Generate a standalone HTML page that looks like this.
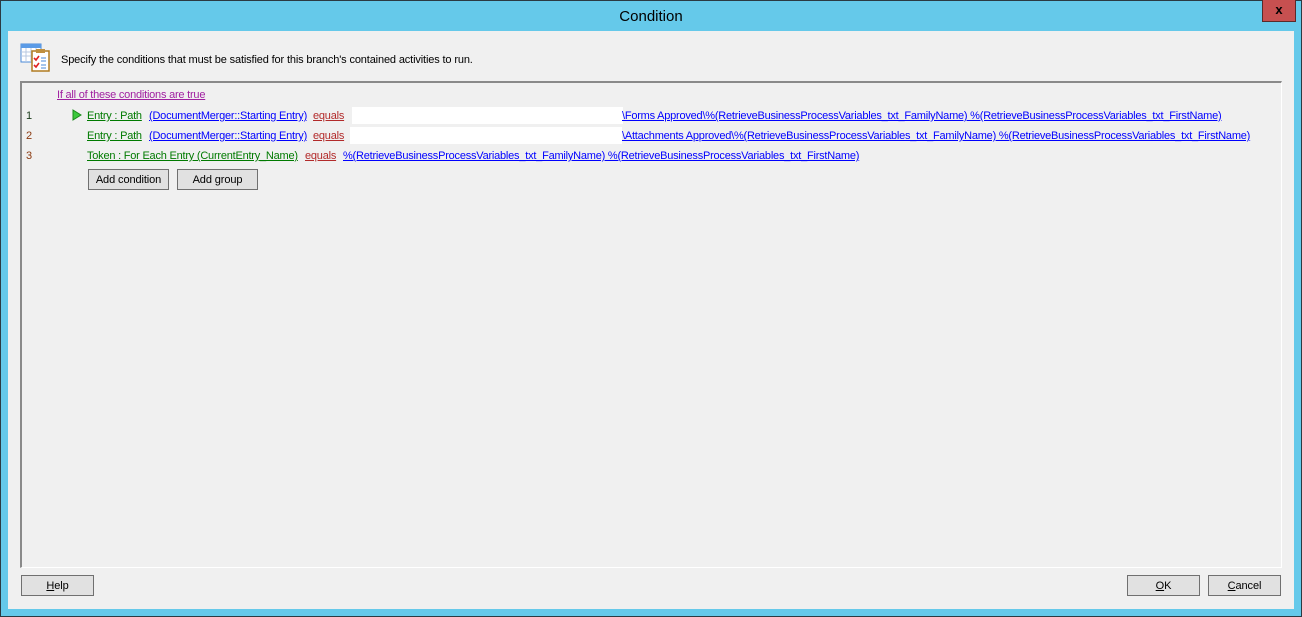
<!DOCTYPE html>
<html><head><style>
*{margin:0;padding:0;box-sizing:border-box}
body{width:1302px;height:617px;background:#65c9ea;position:relative;overflow:hidden;font-family:"Liberation Sans",sans-serif;font-size:11px;letter-spacing:-0.22px}
.outer{position:absolute;left:0;top:0;width:1302px;height:617px;border:1px solid #2b3a42}
.title{position:absolute;left:0;width:1302px;top:8px;text-align:center;font-size:15px;letter-spacing:0;color:#000}
.close{position:absolute;left:1262px;top:0;width:34px;height:22px;background:#c75050;border:1px solid #5a2a2a;border-top:none;color:#000;font-weight:bold;font-size:13px;text-align:center;line-height:20px;letter-spacing:0}
.content{position:absolute;left:8px;top:31px;width:1286px;height:578px;background:#f0f0f0}
.t{position:absolute;white-space:nowrap;line-height:13px}
.u{text-decoration:underline}
.panel{position:absolute;left:20px;top:81px;width:1262px;height:487px;border-top:2px solid #8a8a8a;border-left:2px solid #8a8a8a;border-right:1px solid #fff;border-bottom:1px solid #fff;background:#f0f0f0}
.btn{position:absolute;height:21px;background:#e1e1e1;border:1px solid #707070;text-align:center;line-height:20px;color:#000;letter-spacing:-0.1px}
.g{color:#007a00}.b{color:#0000ff}.r{color:#b22a2a}
.wb{position:absolute;background:#fff;height:17px}
</style></head><body>
<div class="outer"></div>
<div class="title">Condition</div>
<div class="close">x</div>
<div class="content"></div>
<svg style="position:absolute;left:20px;top:43px" width="32" height="30" viewBox="0 0 32 30">
<rect x="1" y="1" width="20" height="18" fill="#fff" stroke="#4a8ad8"/>
<rect x="1" y="1" width="20" height="4" fill="#5b9be6"/>
<path d="M1 9h20M1 13h20M6 5v14M11 5v14M16 5v14" stroke="#b8c8e0"/>
<rect x="12" y="8" width="17" height="20" fill="#fff" stroke="#b07a20" stroke-width="1.5"/>
<rect x="16" y="6" width="9" height="4" fill="#c09040"/>
<path d="M14 15l2 2 3-4M14 22l2 2 3-4" stroke="#e02020" stroke-width="1.6" fill="none"/>
<path d="M21 15h5M21 18h5M21 22h5M21 25h5" stroke="#4a8ad8"/>
</svg>
<div class="t" style="left:61px;top:54px;color:#000;letter-spacing:-0.14px">Specify the conditions that must be satisfied for this branch's contained activities to run.</div>
<div class="panel"></div>
<div class="t u" style="left:57px;top:89px;color:#a020a0">If all of these conditions are true</div>
<div class="t" style="left:26px;top:110px;color:#1a3a1a">1</div>
<div class="t" style="left:26px;top:130px;color:#8b3a10">2</div>
<div class="t" style="left:26px;top:150px;color:#8b3a10">3</div>
<svg style="position:absolute;left:72px;top:109px" width="10" height="12"><path d="M1 1L9 6L1 11Z" fill="#3cc83c" stroke="#1a8a1a"/></svg>
<div class="t u g" style="left:87px;top:110px">Entry : Path</div>
<div class="t u b" style="left:149px;top:110px">(DocumentMerger::Starting Entry)</div>
<div class="t u r" style="left:313px;top:110px">equals</div>
<div class="wb" style="left:352px;top:107px;width:271px"></div>
<div class="t u b" style="left:622px;top:110px">\Forms Approved\%(RetrieveBusinessProcessVariables_txt_FamilyName) %(RetrieveBusinessProcessVariables_txt_FirstName)</div>
<div class="t u g" style="left:87px;top:130px">Entry : Path</div>
<div class="t u b" style="left:149px;top:130px">(DocumentMerger::Starting Entry)</div>
<div class="t u r" style="left:313px;top:130px">equals</div>
<div class="wb" style="left:350px;top:127px;width:272px"></div>
<div class="t u b" style="left:622px;top:130px">\Attachments Approved\%(RetrieveBusinessProcessVariables_txt_FamilyName) %(RetrieveBusinessProcessVariables_txt_FirstName)</div>
<div class="t u g" style="left:87px;top:150px">Token : For Each Entry (CurrentEntry_Name)</div>
<div class="t u r" style="left:305px;top:150px">equals</div>
<div class="t u b" style="left:343px;top:150px">%(RetrieveBusinessProcessVariables_txt_FamilyName) %(RetrieveBusinessProcessVariables_txt_FirstName)</div>
<div class="btn" style="left:88px;top:169px;width:81px">Add condition</div>
<div class="btn" style="left:177px;top:169px;width:81px">Add group</div>
<div class="btn" style="left:21px;top:575px;width:73px"><u>H</u>elp</div>
<div class="btn" style="left:1127px;top:575px;width:73px"><u>O</u>K</div>
<div class="btn" style="left:1208px;top:575px;width:73px"><u>C</u>ancel</div>
</body></html>
